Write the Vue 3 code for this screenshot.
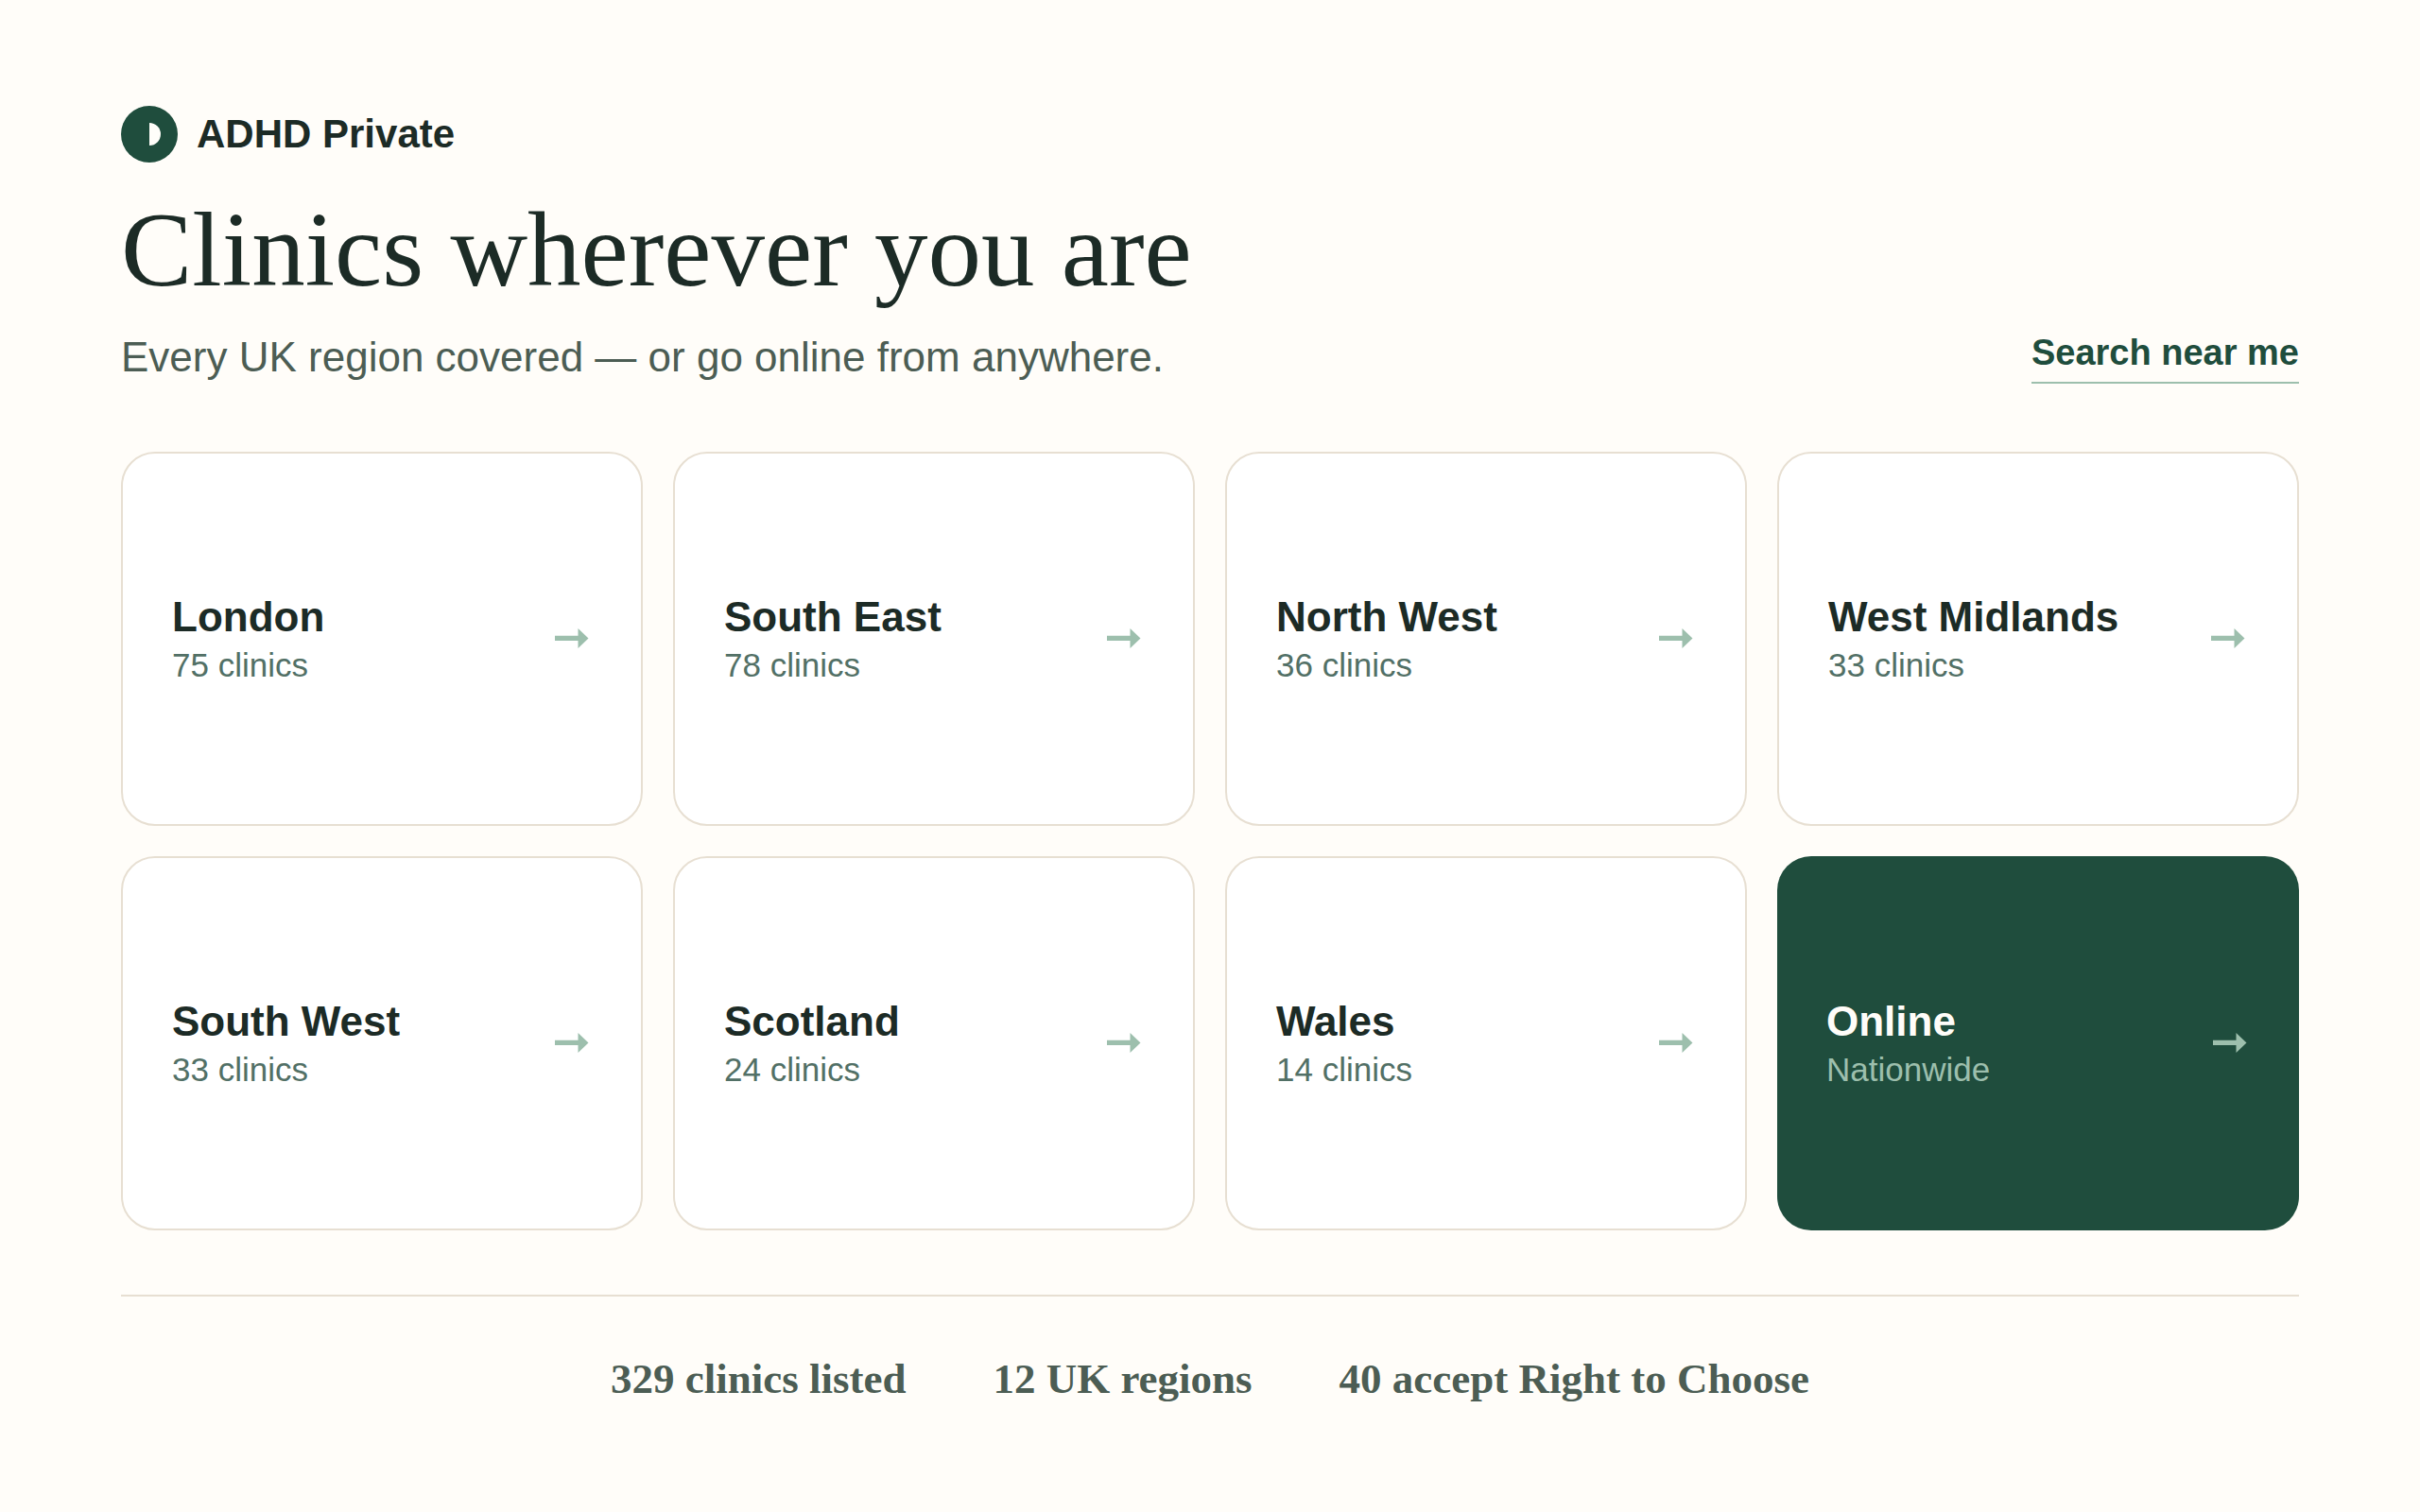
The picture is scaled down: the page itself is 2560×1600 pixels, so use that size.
<script setup>
const regions = [
  { name: 'London', detail: '75 clinics' },
  { name: 'South East', detail: '78 clinics' },
  { name: 'North West', detail: '36 clinics' },
  { name: 'West Midlands', detail: '33 clinics' },
  { name: 'South West', detail: '33 clinics' },
  { name: 'Scotland', detail: '24 clinics' },
  { name: 'Wales', detail: '14 clinics' },
  { name: 'Online', detail: 'Nationwide', featured: true },
]

const stats = ['329 clinics listed', '12 UK regions', '40 accept Right to Choose']
</script>

<template>
  <div class="page">
    <header class="header">
      <div class="intro">
        <div class="brand">
          <svg class="logo" viewBox="0 0 60 60" aria-hidden="true">
            <circle cx="30" cy="30" r="30" fill="#1f4d3d" />
            <path d="M30 18a12 12 0 0 1 0 24z" fill="#fffefa" />
          </svg>
          <span>ADHD Private</span>
        </div>
        <h1 class="title">Clinics wherever you are</h1>
        <p class="subtitle">Every UK region covered — or go online from anywhere.</p>
      </div>
      <a class="search" href="#near-me">Search near me</a>
    </header>

    <main class="grid">
      <a
        v-for="region in regions"
        :key="region.name"
        class="card"
        :class="{ featured: region.featured }"
        href="#region"
      >
        <span class="label">
          <span class="name">{{ region.name }}</span>
          <span class="detail">{{ region.detail }}</span>
        </span>
        <svg class="arrow" viewBox="0 0 40 22" aria-hidden="true">
          <path d="M1 7.700h24.500V0L36.500 10.500 25.500 21V13H1z" fill="currentColor" />
        </svg>
      </a>
    </main>

    <footer class="footer">
      <span v-for="stat in stats" :key="stat">{{ stat }}</span>
    </footer>
  </div>
</template>

<style>
body {
  background: #fffdf9;
}
</style>

<style scoped>
.page {
  box-sizing: border-box;
  display: flex;
  flex-direction: column;
  min-height: 100vh;
  padding: 112px 128px;
  background: #fffdf9;
  color: #1c2b26;
  font-family: "Liberation Sans", Arial, sans-serif;
}

.header {
  display: flex;
  align-items: flex-end;
  justify-content: space-between;
  gap: 48px;
}

.brand {
  display: flex;
  align-items: center;
  gap: 20px;
  font-size: 42px;
  font-weight: 700;
  line-height: 60px;
}

.logo {
  width: 60px;
  height: 60px;
}

.title {
  margin: 32px 0 0;
  font-family: "Liberation Serif", "Times New Roman", serif;
  font-size: 113px;
  font-weight: 400;
  line-height: 120px;
}

.subtitle {
  margin: 26px 0 0;
  color: #4c5d54;
  font-size: 44px;
  line-height: 56px;
}

.search {
  padding-bottom: 8px;
  border-bottom: 2px solid #9dbfad;
  color: #1f4d3d;
  font-size: 38px;
  font-weight: 700;
  line-height: 46px;
  text-decoration: none;
  white-space: nowrap;
}

.grid {
  display: grid;
  flex: 1;
  grid-template-columns: repeat(4, 1fr);
  grid-auto-rows: 1fr;
  gap: 32px;
  margin-top: 72px;
}

.card {
  display: flex;
  align-items: center;
  justify-content: space-between;
  padding: 52px;
  border: 2px solid #e7dfd2;
  border-radius: 36px;
  background: #fff;
  color: #1c2b26;
  text-decoration: none;
}

.label {
  display: flex;
  flex-direction: column;
  gap: 2px;
}

.name {
  font-size: 44px;
  font-weight: 700;
  line-height: 54px;
}

.detail {
  color: #527066;
  font-size: 35px;
  line-height: 44px;
}

.arrow {
  flex: none;
  width: 40px;
  height: 22px;
  color: #9dbfad;
}

.featured {
  border: 0;
  background: #1f4d3d;
  color: #fffdf9;
}

.featured .detail {
  color: #9dbfad;
}

.footer {
  display: flex;
  justify-content: center;
  gap: 92px;
  margin-top: 68px;
  padding-top: 58px;
  border-top: 2px solid #e7dfd2;
  color: #4c5d54;
  font-family: "Liberation Serif", "Times New Roman", serif;
  font-size: 45px;
  font-weight: 700;
  line-height: 58px;
}
</style>
